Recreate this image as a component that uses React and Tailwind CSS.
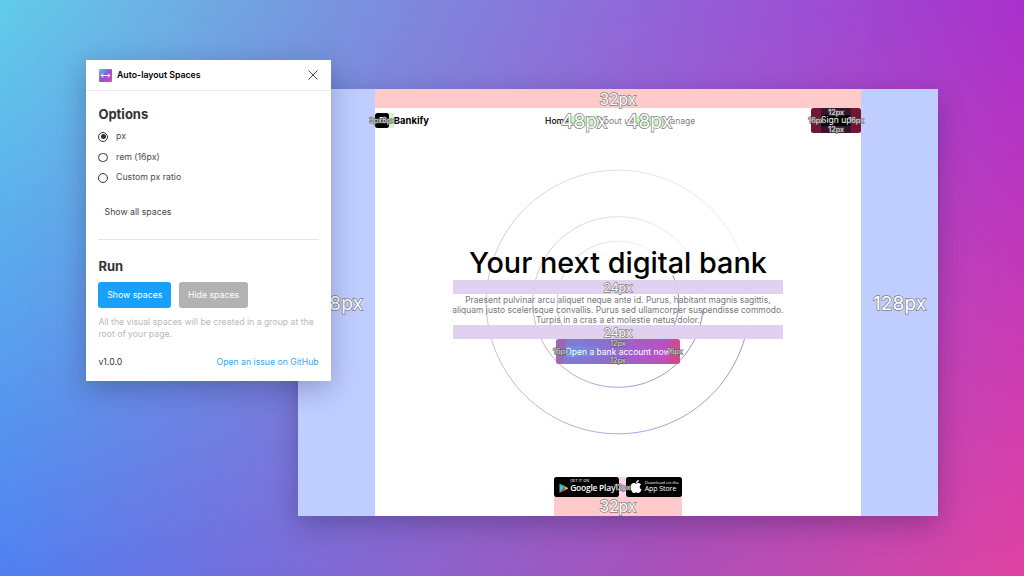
import React from "react";

function Measure({ children, className = "" }) {
  return (
    <span
      className={`pointer-events-none absolute z-10 -translate-x-1/2 -translate-y-1/2 whitespace-nowrap leading-none font-normal [paint-order:stroke_fill] ${className}`}
    >
      {children}
    </span>
  );
}

const big = "text-white [-webkit-text-stroke:1.4px_#7d7d7d]";
const small = "text-[7.3px] text-white/85 [-webkit-text-stroke:1.1px_#555555]";

function Radio({ label, checked }) {
  return (
    <div className="flex h-[20.4px] items-center gap-[8px]">
      <span className="flex size-[9.6px] items-center justify-center rounded-full border border-[#333333]">
        {checked && <span className="size-[5px] rounded-full bg-[#333333]" />}
      </span>
      <span>{label}</span>
    </div>
  );
}

function PluginPanel() {
  return (
    <section className="absolute left-[86px] top-[60px] isolate z-20 flex h-[321px] w-[245.4px] flex-col bg-white text-[8.75px] text-[#4a4a4a] shadow-[0_8px_26px_rgba(20,20,60,0.28)]">
      <header className="flex h-[31px] items-center border-b border-[#e8e8e8] pl-[12.5px] pr-[13px]">
        <svg className="size-[13px]" viewBox="0 0 13 13">
          <defs>
            <linearGradient id="logo" x1="0" y1="0" x2="1" y2="1">
              <stop offset="0" stopColor="#4cc4f0" />
              <stop offset="0.5" stopColor="#9850d8" />
              <stop offset="1" stopColor="#e444a8" />
            </linearGradient>
          </defs>
          <rect width="13" height="13" rx="1.2" fill="url(#logo)" />
          <path d="M2.2 6.5h8.6M4.2 4.5l-2 2 2 2M8.8 4.5l2 2-2 2" fill="none" stroke="white" strokeWidth="1" />
        </svg>
        <h1 className="ml-[5.5px] mt-[2px] text-[8.75px] font-semibold text-black">Auto-layout Spaces</h1>
        <svg className="ml-auto size-[10px]" viewBox="0 0 10 10">
          <path d="M.5.5l9 9M9.5.5l-9 9" stroke="#333333" strokeWidth="0.9" />
        </svg>
      </header>
      <div className="flex flex-1 flex-col pl-[12.4px] pr-[12.8px]">
        <h2 className="mt-[14px] text-[13px] font-bold leading-[18px] text-[#333333]">Options</h2>
        <div className="mt-[3.8px]">
          <Radio label="px" checked />
          <Radio label="rem (16px)" />
          <Radio label="Custom px ratio" />
        </div>
        <div className="ml-[6.2px] mt-[17.2px] leading-[14px] text-[#444444]">Show all spaces</div>
        <div className="mt-[19.9px] h-px bg-[#e4e4e4]" />
        <h2 className="mt-[17px] text-[13px] font-bold leading-[18px] text-[#333333]">Run</h2>
        <div className="mt-[7px] flex gap-[8px] text-white">
          <button className="h-[26px] w-[72.8px] rounded-[3px] bg-[#18a0fb] pt-px">Show spaces</button>
          <button className="h-[26px] w-[68.8px] rounded-[3px] bg-[#b2b2b2] pt-px">Hide spaces</button>
        </div>
        <p className="mt-[7.5px] whitespace-nowrap text-[8.7px] leading-[12.8px] text-[#b9b9b9]">
          All the visual spaces will be created in a group at the
          <br />
          root of your page.
        </p>
        <footer className="mt-[14px] flex justify-between leading-[14px] text-[#333333]">
          <span>v1.0.0</span>
          <span className="text-[8.7px] text-[#32a8f0]">Open an issue on GitHub</span>
        </footer>
      </div>
    </section>
  );
}

function ringSegments(radius, startDeg, strength) {
  const count = 90;
  return Array.from({ length: count }, (_, i) => {
    const from = ((startDeg + (i * 360) / count) * Math.PI) / 180;
    const to = ((startDeg + ((i + 1) * 360) / count) * Math.PI) / 180;
    const t = i / count;
    const x1 = radius * Math.cos(from);
    const y1 = radius * Math.sin(from);
    const x2 = radius * Math.cos(to);
    const y2 = radius * Math.sin(to);
    return (
      <path
        key={`${radius}-${i}`}
        d={`M${x1} ${y1}A${radius} ${radius} 0 0 1 ${x2} ${y2}`}
        strokeOpacity={strength * Math.pow(1 - t, 1.05) + 0.03}
      />
    );
  });
}

function Rings() {
  return (
    <svg
      className="absolute left-[calc(50%_-_133px)] top-[80px] size-[266px]"
      viewBox="-133 -133 266 266"
      fill="none"
      stroke="#5c42b4"
      strokeWidth="0.85"
    >
      {ringSegments(131.8, 15, 0.66)}
      {ringSegments(85.3, 5, 0.75)}
      {ringSegments(60.8, -26, 0.8)}
    </svg>
  );
}

function SiteHeader() {
  return (
    <div className="relative flex h-[24.6px] items-center justify-between">
      <div className="flex items-center">
        <span className="flex size-[14.4px] items-center justify-center rounded-[2.5px] bg-black text-[8px] font-bold text-white">B</span>
        <span className="h-[14.4px] w-[4.8px] bg-[#d0f5cc]" />
        <span className="pt-px text-[9.5px] font-bold text-black">Bankify</span>
      </div>
      <Measure className={`left-[1px] top-[13px] ${small}`}>3px</Measure>
      <Measure className={`left-[14px] top-[13px] ${small}`}>8px</Measure>
      <div className="absolute left-[170.5px] top-[0.5px] flex h-full items-center whitespace-nowrap text-[8.5px] text-[#808080]">
        <span className="w-[24px] font-medium text-black">Home</span>
        <span className="h-[10.2px] w-[28.8px] bg-[#c9f7c4]" />
        <span className="w-[36px]">About us</span>
        <span className="h-[10.2px] w-[28.8px] bg-[#c9f7c4]" />
        <span>Manage</span>
        <Measure className={`left-[39px] top-[13px] text-[19.2px] ${big}`}>48px</Measure>
        <Measure className={`left-[104px] top-[13px] text-[19.2px] ${big}`}>48px</Measure>
      </div>
      <div className="relative flex h-[24.6px] w-[50px] rounded-[2.5px] bg-[#701734]">
        <div className="mx-auto flex w-[30.5px] flex-col bg-[#36142f]">
          <span className="my-auto flex h-[10.2px] items-center justify-center whitespace-nowrap bg-black text-[8.5px] text-white">Sign up</span>
        </div>
        <Measure className={`left-1/2 top-[4.5px] ${small}`}>12px</Measure>
        <Measure className={`left-1/2 top-[21.7px] ${small}`}>12px</Measure>
        <Measure className={`left-[5px] top-[13px] ${small}`}>16px</Measure>
        <Measure className={`left-[45px] top-[13px] ${small}`}>16px</Measure>
      </div>
    </div>
  );
}

function Hero() {
  return (
    <div className="relative mt-[107px] flex flex-col items-center">
      <h2 className="flex h-[40px] items-center whitespace-nowrap pt-[5px] text-[28.8px] font-medium text-black">Your next digital bank</h2>
      <div className="relative h-[14.4px] w-[330.5px] bg-[#dfcff0]/95">
        <Measure className={`left-1/2 top-[7.8px] text-[12.1px] ${big}`}>24px</Measure>
      </div>
      <p className="relative top-[0.6px] whitespace-nowrap text-center text-[8.48px] leading-[10.2px] text-[#777777]">
        Praesent pulvinar arcu aliquet neque ante id. Purus, habitant magnis sagittis,
        <br />
        aliquam justo scelerisque convallis. Purus sed ullamcorper suspendisse commodo.
        <br />
        Turpis in a cras a et molestie netus dolor.
      </p>
      <div className="relative h-[14.4px] w-[330.5px] bg-[#dfcff0]/95">
        <Measure className={`left-1/2 top-[7.8px] text-[12.1px] ${big}`}>24px</Measure>
      </div>
      <div className="relative flex h-[24.6px] w-[124px] items-center justify-center rounded-[2.5px] bg-[linear-gradient(100deg,#9a68b4_0%,#9a68b4_8%,#7f7cd4_9%,#8b70cc_40%,#a95cc4_65%,#bc50b8_89%,#d2488e_93%,#d84690_100%)]">
        <span className="absolute inset-x-[10px] top-[7.2px] h-[10.2px] bg-[linear-gradient(90deg,#6797e4,#8873d8_35%,#a75bd0_70%,#bd4fc0)]" />
        <span className="relative top-[0.6px] whitespace-nowrap text-[8.5px] text-white">Open a bank account now</span>
        <Measure className={`left-1/2 top-[4.5px] ${small}`}>12px</Measure>
        <Measure className={`left-1/2 top-[21.7px] ${small}`}>12px</Measure>
        <Measure className={`left-[5px] top-[12.8px] ${small}`}>16px</Measure>
        <Measure className={`left-[119px] top-[12.8px] ${small}`}>16px</Measure>
      </div>
    </div>
  );
}

function StoreBadges() {
  return (
    <div className="mx-auto mt-auto flex flex-col items-stretch">
      <div className="relative flex h-[19.8px] bg-[linear-gradient(90deg,transparent_65px,#ffd0f0_65px,#ffd0f0_73px,transparent_73px)]">
        <div className="flex w-[65.5px] items-center rounded-[2.5px] bg-black pl-[5px] text-white">
          <svg className="mt-[3px] h-[10.5px] w-[9.5px]" viewBox="0 0 19 21">
            <path d="M1 1v19l9-9.5z" fill="#36c5e8" />
            <path d="M1 1l9 9.5 4-3.2z" fill="#43d58a" />
            <path d="M14 7.3l-4 3.2 4 3.4 4.5-3.4z" fill="#f6c443" />
            <path d="M1 20l9-9.5 4 3.4z" fill="#e64658" />
          </svg>
          <div className="ml-[2px] flex flex-col">
            <span className="whitespace-nowrap text-[3.8px] leading-[4px]">GET IT ON</span>
            <span className="mb-[1px] whitespace-nowrap font-['Open_Sans',sans-serif] text-[8.5px] font-semibold leading-[10px] tracking-[-0.25px]">Google Play</span>
          </div>
        </div>
        <div className="w-[7px]" />
        <div className="flex w-[56px] items-center rounded-[2.5px] bg-black pl-[4px] text-white">
          <svg className="mb-[1px] h-[15px] w-[12px]" viewBox="0 0 384 512" fill="white">
            <path d="M318.7 268.7c-.2-36.7 16.4-64.4 50-84.8-18.8-26.9-47.2-41.7-84.7-44.6-35.5-2.8-74.3 20.7-88.5 20.7-15 0-49.4-19.7-76.4-19.7C63.3 141.2 4 184.8 4 273.5q0 39.3 14.4 81.2c12.8 36.7 59 126.7 107.2 125.2 25.2-.6 43-17.9 75.8-17.9 31.8 0 48.3 17.9 76.4 17.9 48.6-.7 90.4-82.5 102.6-119.3-65.2-30.7-61.7-90-61.7-91.9zm-56.6-164.2c27.3-32.4 24.8-61.9 24-72.5-24.1 1.4-52 16.4-67.9 34.9-17.5 19.8-27.8 44.3-25.6 71.9 26.1 2 49.9-11.4 69.5-34.3z" />
          </svg>
          <div className="ml-[2.5px] flex flex-col font-['Open_Sans',sans-serif]">
            <span className="whitespace-nowrap text-[4.3px] leading-[5px]">Download on the</span>
            <span className="mb-[1px] whitespace-nowrap text-[6.9px] font-medium leading-[7.5px]">App Store</span>
          </div>
        </div>
        <Measure className={`left-[69px] top-[10.5px] ${small}`}>12px</Measure>
      </div>
      <div className="relative h-[19.2px] bg-[#ffcac9]">
        <Measure className={`left-1/2 top-[10.5px] text-[15.6px] ${big}`}>32px</Measure>
      </div>
    </div>
  );
}

function Website() {
  return (
    <section className="absolute left-[298px] top-[89px] isolate z-10 flex h-[427px] w-[640px] bg-white shadow-[0_9px_26px_rgba(20,20,60,0.3)]">
      <div className="relative w-[76.6px] bg-[#bfcdff]">
        <Measure className={`left-[38.4px] top-[214.5px] text-[19.2px] ${big}`}>128px</Measure>
      </div>
      <main className="relative flex flex-1 flex-col">
        <Rings />
        <div className="relative h-[19.2px] bg-[#ffcac9]">
          <Measure className={`left-1/2 top-[10.5px] text-[15.6px] ${big}`}>32px</Measure>
        </div>
        <SiteHeader />
        <Hero />
        <StoreBadges />
      </main>
      <div className="relative w-[76.8px] bg-[#bfcdff]">
        <Measure className={`left-[38.4px] top-[214.5px] text-[19.2px] ${big}`}>128px</Measure>
      </div>
    </section>
  );
}

export default function App() {
  return (
    <div className="relative h-[576px] w-[1024px] overflow-hidden bg-[linear-gradient(90deg,#62cdea_0%,#7699df_30%,#9363d8_65%,#aa30cc_100%)] font-['Inter',sans-serif]">
      <div className="absolute inset-0 bg-[linear-gradient(90deg,#5080f0_0%,#6b72e2_18%,#8468d2_35%,#a950b8_65%,#e043a2_100%)] [mask-image:linear-gradient(180deg,transparent,black)]" />
      <Website />
      <PluginPanel />
    </div>
  );
}
